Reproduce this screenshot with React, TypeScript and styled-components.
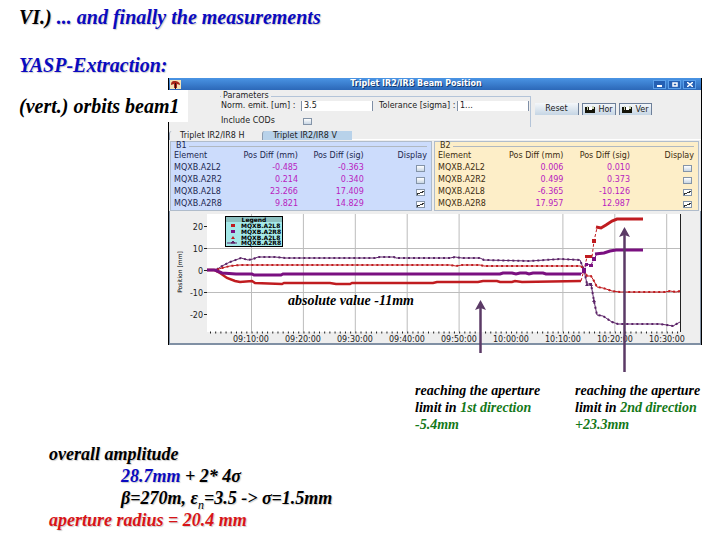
import React from "react";
import styled, { createGlobalStyle } from "styled-components";

const GlobalStyle = createGlobalStyle`
  * { box-sizing: border-box; }
  body { margin: 0; background: #fff; }
`;

const serif = `"Liberation Serif", "Times New Roman", serif`;
const sans = `"DejaVu Sans", Verdana, sans-serif`;

const Page = styled.main`
  min-height: 100vh;
  color: #000;
  font: italic bold 18px/22px ${serif};
`;

const Header = styled.header`
  display: flex;
  flex-direction: column;
  gap: 26px;
  padding: 6px 19px 2px;
`;

const Heading = styled.h1`
  margin: 0;
  font-size: 20px;
  line-height: 22px;
  text-shadow: 1px 1px 1px #ccc;
`;

const Tint = styled.span<{ $color: string }>`
  color: ${(p) => p.$color};
`;

const Figure = styled.section`
  position: relative;
`;

const OrbitLabel = styled.h2`
  position: absolute;
  top: 12px;
  left: 0;
  margin: 0;
  padding: 5px 8px 5px 19px;
  background: #fff;
  font-size: 20px;
  line-height: 22px;
`;

const AppWindow = styled.div`
  margin: 0 18px 0 168px;
  border: solid #000;
  border-width: 0 1px 0 1px;
  background: #eee;
  color: #222;
  font: normal 8px/12px ${sans};
`;

const TitleBar = styled.div`
  display: flex;
  align-items: center;
  height: 12px;
  padding: 0 5px 0 1px;
  background: linear-gradient(#4a94e4, #2c68b8);
`;

const WindowTitle = styled.div`
  flex: 1;
  color: #fff;
  font-weight: bold;
  text-align: center;
  text-shadow: 1px 1px 0 #123a70;
`;

const WindowButton = styled.button`
  display: grid;
  place-items: center;
  width: 13px;
  height: 9px;
  margin-left: 2px;
  padding: 0;
  border: 1px solid #5ba0ea;
  background: #2560b4;
`;

const Toolbar = styled.div`
  display: flex;
  align-items: flex-start;
  height: 41px;
  padding-left: 51px;
`;

const Params = styled.fieldset`
  display: grid;
  grid-template-columns: 80px 72px 84px 72px;
  row-gap: 3px;
  height: 35px;
  margin: 2px 0 0;
  padding: 0 1px;
  border: solid #b4c4d8;
  border-width: 1px 1px 0 0;
`;

const Legend = styled.legend`
  padding: 0 2px;
  line-height: 8px;
`;

const FieldLabel = styled.label<{ $inset?: boolean }>`
  padding-left: ${(p) => (p.$inset ? "6px" : "0")};
  white-space: nowrap;
`;

const Field = styled.input`
  width: 100%;
  height: 10px;
  margin: 1px 0;
  padding: 0 2px;
  border: solid #7f8fa6;
  border-width: 0 1px;
  background: #fff;
  color: #222;
  font: 8px/10px ${sans};
`;

const Buttons = styled.div`
  display: flex;
  gap: 3px;
  padding: 13px 0 0 4px;
`;

const ToolButton = styled.button<{ $width: number; $raised?: boolean }>`
  display: flex;
  align-items: center;
  justify-content: center;
  gap: 3px;
  width: ${(p) => p.$width}px;
  height: 12px;
  padding: 0;
  border: solid #6d7f99;
  border-width: ${(p) => (p.$raised ? "0 1px 0 0" : "1px 1px 0 1px")};
  background: linear-gradient(#f4f7fa, #c5d5e4);
  color: #222;
  font: 8px/10px ${sans};
`;

const Check = styled.input`
  appearance: none;
  display: block;
  width: 9px;
  height: 7px;
  margin: 0;
  border: 1px solid #8494a8;
  background: linear-gradient(#fff, #c8d6e4);
  &:checked {
    background: #fff linear-gradient(155deg, transparent 45%, #333 45%, #333 62%, transparent 62%);
  }
`;

const CheckSlot = styled.div`
  padding: 3px 0 0 2px;
`;

const Tabs = styled.div`
  display: flex;
  height: 8px;
`;

const Tab = styled.button<{ $active?: boolean; $width: number }>`
  width: ${(p) => p.$width}px;
  height: 9px;
  padding: 0 10px;
  border: solid #8c9cb0;
  border-width: 0 0 0 1px;
  border-radius: 3px 0 0 0;
  background: ${(p) => (p.$active ? "#b8d2ea" : "#eee")};
  color: #222;
  font: 8px/9px ${sans};
  text-align: left;
  white-space: nowrap;
`;

const Beams = styled.div`
  display: grid;
  grid-template-columns: 262fr 265fr;
  gap: 2px;
  padding: 1px 2px 0 1px;
  border-top: 1px solid #fff;
`;

const Beam = styled.section<{ $bg: string; $ink: string }>`
  padding: 0 4px 0 3px;
  border: 1px solid #b0bccb;
  background: ${(p) => p.$bg};
  color: ${(p) => p.$ink};
`;

const BeamTitle = styled.h3`
  display: flex;
  align-items: center;
  gap: 2px;
  margin: 0;
  padding-left: 2px;
  font: normal 8px/8px ${sans};
  &::after {
    content: "";
    flex: 1;
    border-top: 1px solid #b0b8c0;
  }
`;

const BeamTable = styled.table`
  width: 100%;
  table-layout: fixed;
  border-collapse: collapse;
`;

const Cell = styled.td<{ $value?: boolean }>`
  height: 12px;
  padding: 0;
  color: ${(p) => (p.$value ? "#b81cc0" : "inherit")};
  line-height: 12px;
  text-align: ${(p) => (p.$value ? "right" : "left")};
  white-space: nowrap;
  & > input { margin-left: auto; margin-right: 2px; }
`;

const HeadCell = styled.th<{ $right?: boolean; $width: string }>`
  width: ${(p) => p.$width};
  height: 12px;
  padding: 0;
  font-weight: normal;
  line-height: 12px;
  text-align: ${(p) => (p.$right ? "right" : "left")};
  white-space: nowrap;
`;

const ChartFrame = styled.div`
  border: solid #8090a4;
  border-width: 0 1px 2px;
`;

const Chart = styled.svg`
  display: block;
  width: 100%;
  height: auto;
`;

const AbsoluteNote = styled.p`
  position: absolute;
  left: 40%;
  top: 214px;
  margin: 0;
  font-size: 14px;
  line-height: 17px;
`;

const Arrow = styled.svg<{ $left: string; $top: number }>`
  position: absolute;
  left: ${(p) => p.$left};
  top: ${(p) => p.$top}px;
`;

const Captions = styled.section`
  display: grid;
  grid-template-columns: 144px 1fr;
  column-gap: 16px;
  margin: 37px 0 0 415px;
`;

const Caption = styled.p`
  margin: 0;
  font-size: 14px;
  line-height: 17px;
`;

const Summary = styled.section`
  padding: 10px 49px;
`;

const Line = styled.p<{ $indent?: boolean; $color?: string }>`
  margin: 0;
  padding-left: ${(p) => (p.$indent ? "72px" : "0")};
  color: ${(p) => p.$color ?? "#000"};
  line-height: 22px;
  text-shadow: 1px 1px 1px #ccc;
`;

const Sub = styled.sub`
  font-size: 12px;
  font-weight: normal;
  line-height: 0;
`;

type Row = [string, string, string, boolean];

const beam1: Row[] = [
  ["MQXB.A2L2", "-0.485", "-0.363", false],
  ["MQXB.A2R2", "0.214", "0.340", false],
  ["MQXB.A2L8", "23.266", "17.409", true],
  ["MQXB.A2R8", "9.821", "14.829", true],
];

const beam2: Row[] = [
  ["MQXB.A2L2", "0.006", "0.010", false],
  ["MQXB.A2R2", "0.499", "0.373", false],
  ["MQXB.A2L8", "-6.365", "-10.126", true],
  ["MQXB.A2R8", "17.957", "12.987", true],
];

function BeamPanel({ name, rows, bg, ink }: { name: string; rows: Row[]; bg: string; ink: string }) {
  return (
    <Beam $bg={bg} $ink={ink}>
      <BeamTitle>{name}</BeamTitle>
      <BeamTable>
        <thead>
          <tr>
            <HeadCell $width="25%">Element</HeadCell>
            <HeadCell $width="24%" $right>Pos Diff (mm)</HeadCell>
            <HeadCell $width="26%" $right>Pos Diff (sig)</HeadCell>
            <HeadCell $width="25%" $right>Display</HeadCell>
          </tr>
        </thead>
        <tbody>
          {rows.map(([element, mm, sig, shown]) => (
            <tr key={element}>
              <Cell>{element}</Cell>
              <Cell $value>{mm}</Cell>
              <Cell $value>{sig}</Cell>
              <Cell>
                <Check type="checkbox" aria-label={`Display ${name} ${element}`} defaultChecked={shown} />
              </Cell>
            </tr>
          ))}
        </tbody>
      </BeamTable>
    </Beam>
  );
}

const RED = "#c01c20";
const PURPLE = "#7a1080";
const VIOLET = "#5c2468";

const thickRed =
  "207,270 214,270 220,273 227,278 235,281 240,282 252,281 255,283 282,284 284,283 330,283 336,284 350,284 352,283 433,283 437,282 478,282 483,281 497,281 500,282 512,282 515,281 522,282 581,281";
const thickPurple =
  "207,270 215,270 222,273 236,274 252,274 254,275 281,275 283,274 500,274 503,273 512,273 516,274 520,273 526,273 529,274 533,273 543,273 546,274 581,274";
const thinRed =
  "207,270 216,270 222,268 230,266 240,265 278,265 450,265 456,266 462,265 480,265 484,266 581,266 584,270 587,276 591,276 594,281 597,287 603,288 612,291 620,292 665,292 670,291 676,292 680,291";
const thinPurple =
  "207,270 216,270 222,266 230,262 241,258 248,260 253,259 258,257 275,257 285,258 375,258 380,257 394,257 396,258 450,258 455,257 462,258 480,258 484,260 530,261 560,259 580,260 584,270 587,284 591,284 594,301 597,315 603,316 612,322 618,324 660,324 667,325 673,326 680,322";
const riseRed = "581,281 584,270 587,257 592,257 594,241 597,228";
const topRed = "596,227 601,228 606,225 612,221 617,219 643,219";
const risePurple = "581,274 584,270 587,264 591,265 594,259 597,254";
const topPurple = "595,254 604,253 610,251 616,250 643,250";

const legendRows = [
  { name: "MQXB.A2L8", y: 228 },
  { name: "MQXB.A2R8", y: 234 },
  { name: "MQXB.A2L8", y: 240 },
  { name: "MQXB.A2R8", y: 245 },
];

function OrbitChart() {
  const times = ["09:10:00", "09:20:00", "09:30:00", "09:40:00", "09:50:00", "10:00:00", "10:10:00", "10:20:00", "10:30:00"];
  return (
    <Chart viewBox="170 211 530 132" role="img" aria-label="Position in mm over time" fontFamily="DejaVu Sans, sans-serif">
      <rect x="207" y="214" width="474" height="118" fill="#fff" />
      <g stroke="#bcbcbc">
        {times.map((t, i) => (i === 5 ? null : <path key={t} d={`M${251.5 + i * 51.9} 214V332`} />))}
        <path d="M207 248.5H680M207 292.5H680" />
      </g>
      <path d="M680.5 214V332M204 226.5h3M204 248.5h3M204 270.5h3M204 292.5h3M204 314.5h3" stroke="#222" />
      <path d="M210 332.5H680" stroke="#222" strokeDasharray="1 4.19" strokeWidth="2" />
      <g fontSize="8" fill="#222" textAnchor="end">
        {["20", "10", "0", "-10", "-20"].map((v, i) => (
          <text key={v} x="203" y={230 + i * 22}>{v}</text>
        ))}
      </g>
      <g fontSize="8" fill="#222" textAnchor="middle">
        {times.map((t, i) => (
          <text key={t} x={251 + i * 52} y="342">{t}</text>
        ))}
      </g>
      <text transform="translate(182 272) rotate(-90)" fontSize="6" fill="#000" textAnchor="middle">Position [mm]</text>
      <g fill="none">
        <polyline points={thinPurple} stroke={VIOLET} />
        <polyline points={thinPurple} stroke={VIOLET} strokeWidth="2" strokeDasharray="2 3" />
        <polyline points={thinRed} stroke={RED} />
        <polyline points={thinRed} stroke={RED} strokeWidth="2" strokeDasharray="2 3" />
        <polyline points={thickRed} stroke={RED} strokeWidth="2.5" />
        <polyline points={thickPurple} stroke={PURPLE} strokeWidth="3" />
        <polyline points={riseRed} stroke={RED} strokeDasharray="3 2" />
        <polyline points={topRed} stroke={RED} strokeWidth="3" />
        <polyline points={risePurple} stroke={PURPLE} strokeDasharray="3 1" />
        <polyline points={topPurple} stroke={PURPLE} strokeWidth="3" />
      </g>
      <path d="M585 255h7v3h-7zM592 239h4v4h-4z" fill={RED} />
      <path d="M582 268h4v5h-4zM585 263h3v3h-3zM589 264h4v3h-4zM592 257h4v4h-4z" fill={PURPLE} />
      <path d="M585 286l2-3 2 3zM589 286l2-3 2 3zM592 302l2-3 2 3z" fill={VIOLET} />
      <rect x="225.5" y="216.5" width="57" height="30" fill="#a4e8e8" stroke="#000" />
      <rect x="226" y="217" width="56" height="5" fill="#8cc0c0" />
      <g fontSize="6" fontWeight="bold" fill="#000">
        <text x="254" y="222" textAnchor="middle">Legend</text>
        {legendRows.map((r) => (
          <text key={r.y} x="241" y={r.y}>{r.name}</text>
        ))}
      </g>
      <rect x="231" y="224" width="4" height="3" fill={RED} />
      <rect x="231" y="230" width="4" height="3" fill={PURPLE} />
      <path d="M231 239l2-3 2 3z" fill={RED} />
      <path d="M227 243h10M231 243l2-2 2 2z" fill={VIOLET} stroke={VIOLET} />
    </Chart>
  );
}

function UpArrow({ left, top, height }: { left: string; top: number; height: number }) {
  return (
    <Arrow $left={left} $top={top} width="11" height={height} aria-hidden="true">
      <path d={`M5.5 8V${height}`} stroke="#5b3a66" strokeWidth="2.5" />
      <path d="M5.5 0L11 10L5.5 8L0 10z" fill="#5b3a66" />
    </Arrow>
  );
}

function Disk() {
  return (
    <svg width="10" height="7" aria-hidden="true">
      <path d="M0 1h10v6H0z" fill="#15150a" />
      <path d="M2 0h1v4H2zM7 0h2v3H7z" fill="#c8d0b0" />
      <path d="M4 1h3v3H4z" fill="#fff" />
    </svg>
  );
}

export default function App() {
  return (
    <Page>
      <GlobalStyle />
      <Header>
        <Heading>
          VI.) <Tint $color="#0a0ac0">... and finally the measurements</Tint>
        </Heading>
        <Heading>
          <Tint $color="#0a0ac0">YASP-Extraction:</Tint>
        </Heading>
      </Header>
      <Figure>
        <AppWindow>
          <TitleBar>
            <svg width="11" height="9" aria-hidden="true">
              <path d="M0 0h11v9H0z" fill="#f4e4b8" />
              <path d="M1 5C1 1 3 1 5 1s5 1 5 4L7 4v4H4V4z" fill="#a82818" />
              <path d="M5 3h1v6H5z" fill="#301010" />
            </svg>
            <WindowTitle>Triplet IR2/IR8 Beam Position</WindowTitle>
            <WindowButton aria-label="Minimize">
              <svg width="5" height="5"><path d="M0 4h5" stroke="#fff" strokeWidth="2" /></svg>
            </WindowButton>
            <WindowButton aria-label="Maximize">
              <svg width="6" height="5"><path d="M1 1h4v3H1z" fill="none" stroke="#fff" strokeWidth="1.5" /></svg>
            </WindowButton>
            <WindowButton aria-label="Close">
              <svg width="6" height="5"><path d="M0 0l6 5M6 0L0 5" stroke="#fff" strokeWidth="1.5" /></svg>
            </WindowButton>
          </TitleBar>
          <Toolbar>
            <Params>
              <Legend>Parameters</Legend>
              <FieldLabel htmlFor="emit">Norm. emit. [um] :</FieldLabel>
              <Field id="emit" defaultValue="3.5" />
              <FieldLabel htmlFor="tol" $inset>Tolerance [sigma] :</FieldLabel>
              <Field id="tol" defaultValue="1..." />
              <FieldLabel htmlFor="cods">Include CODs</FieldLabel>
              <CheckSlot>
                <Check id="cods" type="checkbox" />
              </CheckSlot>
            </Params>
            <Buttons>
              <ToolButton $width={44} $raised>Reset</ToolButton>
              <ToolButton $width={34}><Disk />Hor</ToolButton>
              <ToolButton $width={33}><Disk />Ver</ToolButton>
            </Buttons>
          </Toolbar>
          <Tabs>
            <Tab $width={93}>Triplet IR2/IR8 H</Tab>
            <Tab $width={90} $active>Triplet IR2/IR8 V</Tab>
          </Tabs>
          <Beams>
            <BeamPanel name="B1" rows={beam1} bg="#ccdcfc" ink="#1c2850" />
            <BeamPanel name="B2" rows={beam2} bg="#fdeec8" ink="#3c2c10" />
          </Beams>
          <ChartFrame>
            <OrbitChart />
          </ChartFrame>
        </AppWindow>
        <OrbitLabel>(vert.) orbits beam1</OrbitLabel>
        <AbsoluteNote>absolute value -11mm</AbsoluteNote>
        <UpArrow left="66%" top={222} height={53} />
        <UpArrow left="86%" top={149} height={145} />
      </Figure>
      <Captions>
        <Caption>
          reaching the aperture limit in <Tint $color="#147818">1st direction -5.4mm</Tint>
        </Caption>
        <Caption>
          reaching the aperture
          <br />
          limit in <Tint $color="#147818">2nd direction</Tint>
          <br />
          <Tint $color="#147818">+23.3mm</Tint>
        </Caption>
      </Captions>
      <Summary>
        <Line>overall amplitude</Line>
        <Line $indent>
          <Tint $color="#0a0ac0">28.7mm</Tint> + 2* 4σ
        </Line>
        <Line $indent>
          β=270m, ε<Sub>n</Sub>=3.5 -&gt; σ=1.5mm
        </Line>
        <Line $color="#d81418">aperture radius = 20.4 mm</Line>
      </Summary>
    </Page>
  );
}
